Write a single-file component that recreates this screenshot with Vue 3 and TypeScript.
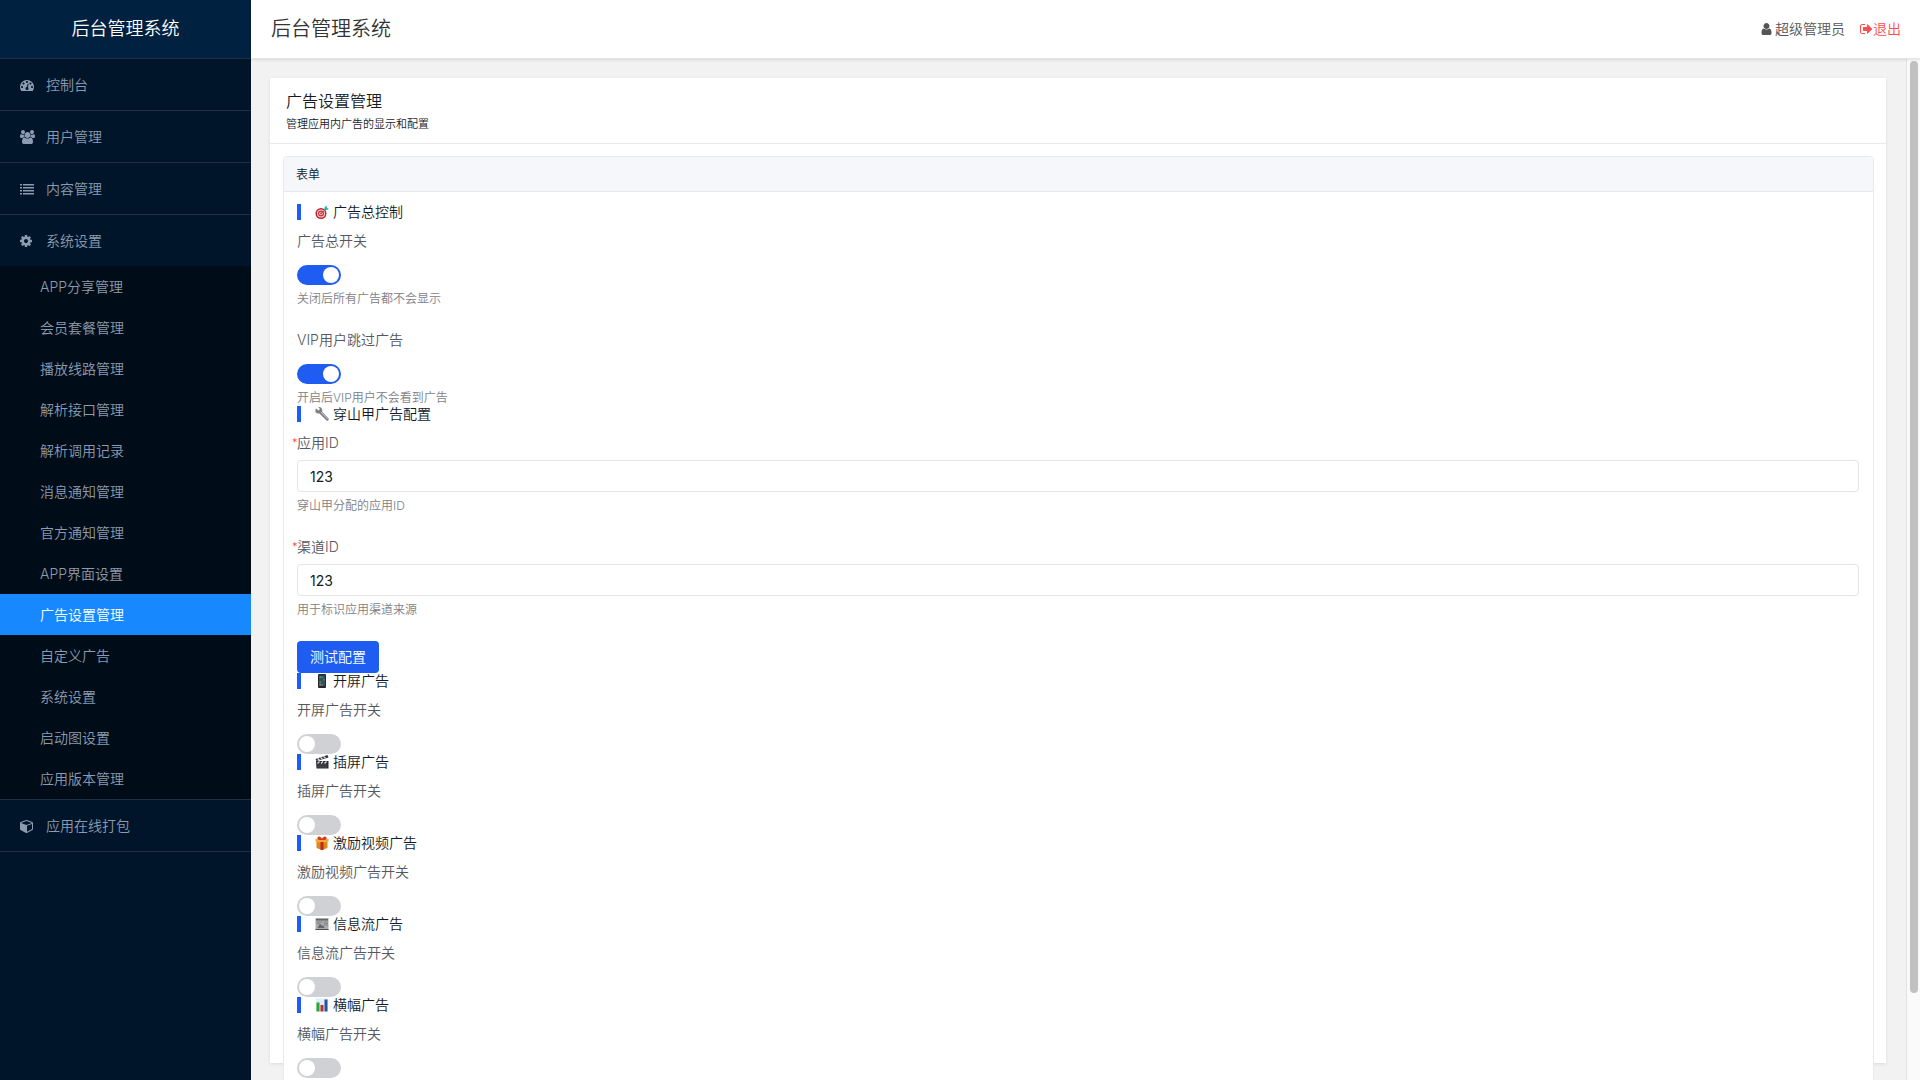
<script setup lang="ts">
import { reactive } from 'vue'

interface MenuItem {
  label: string
  icon: string
  children?: string[]
}

interface SlotSection {
  key: string
  title: string
  icon: string
  enabled: boolean
}

const menu: MenuItem[] = [
  { label: '控制台', icon: 'dashboard' },
  { label: '用户管理', icon: 'users' },
  { label: '内容管理', icon: 'list' },
  {
    label: '系统设置',
    icon: 'cog',
    children: [
      'APP分享管理',
      '会员套餐管理',
      '播放线路管理',
      '解析接口管理',
      '解析调用记录',
      '消息通知管理',
      '官方通知管理',
      'APP界面设置',
      '广告设置管理',
      '自定义广告',
      '系统设置',
      '启动图设置',
      '应用版本管理',
    ],
  },
  { label: '应用在线打包', icon: 'cube' },
]
const current = '广告设置管理'

const icons: Record<string, { box: string; width: number; path: string }> = {
  dashboard: {
    box: '0 0 1792 1792',
    width: 14,
    path: 'M384 1152q0-53-37.5-90.5t-90.5-37.5-90.5 37.5-37.5 90.5 37.5 90.5 90.5 37.5 90.5-37.5 37.5-90.5zm192-448q0-53-37.5-90.5t-90.5-37.5-90.5 37.5-37.5 90.5 37.5 90.5 90.5 37.5 90.5-37.5 37.5-90.5zm428 481l101-382q6-26-7.5-48.5t-38.5-29.5-48 6.5-30 39.5l-101 382q-60 5-107 43.5t-63 98.5q-20 77 20 146t117 89 146-20 89-117q16-60-6-117t-72-91zm660-33q0-53-37.5-90.5t-90.5-37.5-90.5 37.5-37.5 90.5 37.5 90.5 90.5 37.5 90.5-37.5 37.5-90.5zm-640-640q0-53-37.5-90.5t-90.5-37.5-90.5 37.5-37.5 90.5 37.5 90.5 90.5 37.5 90.5-37.5 37.5-90.5zm448 192q0-53-37.5-90.5t-90.5-37.5-90.5 37.5-37.5 90.5 37.5 90.5 90.5 37.5 90.5-37.5 37.5-90.5zm320 448q0 261-141 483-19 29-54 29h-1402q-35 0-54-29-141-221-141-483 0-182 71-348t191-286 286-191 348-71 348 71 286 191 191 286 71 348z',
  },
  users: {
    box: '64 0 1920 1792',
    width: 15,
    path: 'M657 896q-162 5-265 128h-134q-82 0-138-40.5t-56-118.5q0-353 124-353 6 0 43.5 21t97.5 42.5 119 21.5q67 0 133-23-5 37-5 66 0 139 81 256zm1071 637q0 120-73 189.5t-194 69.5h-874q-121 0-194-69.5t-73-189.5q0-53 3.5-103.5t14-109 26.5-108.5 43-97.5 62-81 85.5-53.5 111.5-20q10 0 43 21.5t73 48 107 48 135 21.5 135-21.5 107-48 73-48 43-21.5q61 0 111.5 20t85.5 53.5 62 81 43 97.5 26.5 108.5 14 109 3.5 103.5zm-1024-1277q0 106-75 181t-181 75-181-75-75-181 75-181 181-75 181 75 75 181zm704 384q0 159-112.5 271.5t-271.5 112.5-271.5-112.5-112.5-271.5 112.5-271.5 271.5-112.5 271.5 112.5 112.5 271.5zm576 225q0 78-56 118.5t-138 40.5h-134q-103-123-265-128 81-117 81-256 0-29-5-66 66 23 133 23 59 0 119-21.5t97.5-42.5 43.5-21q124 0 124 353zm-128-609q0 106-75 181t-181 75-181-75-75-181 75-181 181-75 181 75 75 181z',
  },
  list: {
    box: '0 0 1792 1792',
    width: 14,
    path: 'M0 256h256v192H0zM384 256h1408v192H384zM0 640h256v192H0zM384 640h1408v192H384zM0 1024h256v192H0zM384 1024h1408v192H384zM0 1408h256v192H0zM384 1408h1408v192H384z',
  },
  cog: {
    box: '128 0 1536 1792',
    width: 12,
    path: 'M1152 896q0-106-75-181t-181-75-181 75-75 181 75 181 181 75 181-75 75-181zm512-109v222q0 12-8 23t-20 13l-185 28q-19 54-39 91 35 50 107 138 10 12 10 25t-9 23q-27 37-99 108t-94 71q-12 0-26-9l-138-108q-44 23-91 38-16 136-29 186-7 28-36 28h-222q-14 0-24.5-8.5t-11.5-21.5l-28-184q-49-16-90-37l-141 107q-10 9-25 9-14 0-25-11-126-114-165-168-7-10-7-23 0-12 8-23 15-21 51-66.5t54-70.5q-27-50-41-99l-183-27q-13-2-21-12.5t-8-23.5v-222q0-12 8-23t19-13l186-28q14-46 39-92-40-57-107-138-10-12-10-24 0-10 9-23 26-36 98.5-107.5t94.5-71.5q13 0 26 10l138 107q44-23 91-38 16-136 29-186 7-28 36-28h222q14 0 24.5 8.5t11.5 21.5l28 184q49 16 90 37l142-107q9-9 24-9 13 0 25 10 129 119 165 170 7 8 7 22 0 12-8 23-15 21-51 66.5t-54 70.5q26 50 41 98l183 28q13 2 21 12.5t8 23.5z',
  },
  cube: {
    box: '0 0 1664 1792',
    width: 13,
    path: 'M896 1629l640-349v-636l-640 233v752zm-64-865l698-254-698-254-698 254zm832-252v768q0 35-18 65t-49 47l-704 384q-28 16-61 16t-61-16l-704-384q-31-17-49-47t-18-65v-768q0-40 23-73t61-47l704-256q22-8 44-8t44 8l704 256q38 14 61 47t23 73z',
  },
}

const form = reactive({ master: true, vipSkip: true, appId: '123', channelId: '123' })

const slots = reactive<SlotSection[]>([
  { key: 'splash', title: '开屏广告', icon: 'phone', enabled: false },
  { key: 'interstitial', title: '插屏广告', icon: 'clapper', enabled: false },
  { key: 'reward', title: '激励视频广告', icon: 'gift', enabled: false },
  { key: 'feed', title: '信息流广告', icon: 'news', enabled: false },
  { key: 'banner', title: '横幅广告', icon: 'chart', enabled: false },
])
</script>

<template>
  <div class="layout">
    <aside class="sidebar">
      <div class="logo">后台管理系统</div>
      <nav>
        <ul class="menu">
          <li v-for="item in menu" :key="item.label" class="menu-item">
            <a href="#" class="menu-link">
              <span class="menu-icon">
                <svg :viewBox="icons[item.icon].box" :width="icons[item.icon].width" height="14" fill="currentColor" aria-hidden="true">
                  <path :d="icons[item.icon].path" />
                </svg>
              </span>
              {{ item.label }}
            </a>
            <ul v-if="item.children" class="submenu">
              <li v-for="child in item.children" :key="child">
                <a href="#" class="submenu-link" :class="{ active: child === current }">{{ child }}</a>
              </li>
            </ul>
          </li>
        </ul>
      </nav>
    </aside>

    <div class="page">
      <header class="topbar">
        <span class="brand">后台管理系统</span>
        <div class="account">
          <span class="user">
            <svg viewBox="192 0 1408 1792" width="11" height="14" fill="currentColor" aria-hidden="true">
              <path d="M1536 1399q0 109-62.5 187t-150.5 78h-854q-88 0-150.5-78t-62.5-187q0-85 8.5-160.5t31.5-152 58.5-131 94-89 134.5-34.5q131 128 313 128t313-128q76 0 134.5 34.5t94 89 58.5 131 31.5 152 8.5 160.5zm-256-887q0 159-112.5 271.5t-271.5 112.5-271.5-112.5-112.5-271.5 112.5-271.5 271.5-112.5 271.5 112.5 112.5 271.5z" />
            </svg>
            超级管理员
          </span>
          <a href="#" class="logout">
            <svg viewBox="64 0 1664 1792" width="13" height="14" fill="currentColor" aria-hidden="true">
              <path d="M704 1440q0 4 1 20t.5 26.5-3 23.5-10 19.5-20.5 6.5h-320q-119 0-203.5-84.5t-84.5-203.5v-704q0-119 84.5-203.5t203.5-84.5h320q13 0 22.5 9.5t9.5 22.5q0 4 1 20t.5 26.5-3 23.5-10 19.5-20.5 6.5h-320q-66 0-113 47t-47 113v704q0 66 47 113t113 47h312l11.5 1 11.5 3 8 5.5 7 9 2 13.5zm928-544q0 26-19 45l-544 544q-19 19-45 19t-45-19-19-45v-288h-448q-26 0-45-19t-19-45v-384q0-26 19-45t45-19h448v-288q0-26 19-45t45-19 45 19l544 544q19 19 19 45z" />
            </svg>
            退出
          </a>
        </div>
      </header>

      <div class="body">
        <main class="content">
          <div class="card">
            <div class="card-head">
              <h1>广告设置管理</h1>
              <p>管理应用内广告的显示和配置</p>
            </div>
            <form class="panel" @submit.prevent>
              <h2 class="panel-head">表单</h2>
              <div class="panel-body">
                <section>
                  <h3 class="section-title">
                    <svg class="emoji" viewBox="0 0 28 28" aria-hidden="true">
                      <circle cx="12" cy="17" r="11" fill="#c4222b" />
                      <circle cx="12" cy="17" r="8" fill="#f3dede" />
                      <circle cx="12" cy="17" r="6" fill="#cf2a33" />
                      <circle cx="12" cy="17" r="3.6" fill="#f3dede" />
                      <circle cx="12" cy="17" r="1.8" fill="#c4222b" />
                      <path d="M12 17L22 8" stroke="#6a5a5c" stroke-width="1.8" />
                      <path d="M19 10V5l4-4 1 5 4 2-4 2z" fill="#27b3ad" />
                    </svg>
                    广告总控制
                  </h3>
                  <div class="field">
                    <label class="label" for="master">广告总开关</label>
                    <input id="master" v-model="form.master" class="switch" type="checkbox" role="switch" />
                    <p class="help">关闭后所有广告都不会显示</p>
                  </div>
                  <div class="field">
                    <label class="label" for="vip-skip">VIP用户跳过广告</label>
                    <input id="vip-skip" v-model="form.vipSkip" class="switch" type="checkbox" role="switch" />
                    <p class="help">开启后VIP用户不会看到广告</p>
                  </div>
                </section>

                <section>
                  <h3 class="section-title">
                    <svg class="emoji" viewBox="0 0 28 28" aria-hidden="true">
                      <path d="M2 3l5 4 2-1V2L6 0q6-1 8 4 1 3 0 5l13 14q1 3-1 4t-3 0L9 13q-5 1-8-3-1-4 1-7z" fill="#7d7f83" />
                      <path d="M12 10l13 14" stroke="#c9cbce" stroke-width="2" />
                    </svg>
                    穿山甲广告配置
                  </h3>
                  <div class="field">
                    <label class="label required" for="app-id">应用ID</label>
                    <input id="app-id" v-model="form.appId" class="text-input" type="text" required />
                    <p class="help">穿山甲分配的应用ID</p>
                  </div>
                  <div class="field">
                    <label class="label required" for="channel-id">渠道ID</label>
                    <input id="channel-id" v-model="form.channelId" class="text-input" type="text" required />
                    <p class="help">用于标识应用渠道来源</p>
                  </div>
                  <div class="actions">
                    <button type="button" class="primary">测试配置</button>
                  </div>
                </section>

                <section v-for="slot in slots" :key="slot.key">
                  <h3 class="section-title">
                    <svg class="emoji" viewBox="0 0 28 28" aria-hidden="true">
                      <g v-if="slot.icon === 'phone'">
                        <rect x="6" y="0" width="16" height="28" rx="2" fill="#25272b" />
                        <rect x="8" y="3" width="12" height="21" fill="#31505a" />
                        <path d="M9 5h3v3H9zM9 15h3v3H9z" fill="#4fa36a" />
                        <path d="M13 5h3v3h-3zM13 20h3v3h-3z" fill="#3f7fc0" />
                        <path d="M17 10h2v3h-2zM9 20h3v3H9z" fill="#c87b4b" />
                      </g>
                      <g v-else-if="slot.icon === 'clapper'">
                        <path d="M1 8L25 0l2 5L3 12z" fill="#303236" />
                        <path d="M5 7l4 3M11 5l4 3M17 3l4 3" stroke="#e6e7e8" stroke-width="2.4" />
                        <path d="M2 12h25v15H3z" fill="#2b2d31" />
                        <path d="M5 17l4-4M12 17l4-4M19 17l4-4" stroke="#e6e7e8" stroke-width="2.4" />
                        <path d="M5 20h19M5 24h19" stroke="#6d7075" />
                      </g>
                      <g v-else-if="slot.icon === 'gift'">
                        <path d="M3 10l11 3 11-3v14l-11 4-11-4z" fill="#d98a1c" />
                        <path d="M1 6l13-3 13 3v5l-13 3L1 11z" fill="#efac35" />
                        <path d="M11 12h6v16h-6z" fill="#c3261f" />
                        <path d="M14 8Q4 9 5 3q4-5 9 3 5-8 9-3 1 6-9 5z" fill="#d8352b" />
                      </g>
                      <g v-else-if="slot.icon === 'news'">
                        <rect x="1" y="2" width="26" height="24" fill="#a9abad" />
                        <path d="M2 4h24v3H2z" fill="#626467" />
                        <path d="M3 10h12M3 13h6M18 10h8M18 13h8M18 16h8" stroke="#77797c" stroke-width="1.4" />
                        <path d="M5 22l5-9 4 5 2-2 3 6z" fill="#66686b" />
                        <path d="M1 24h26v2H1z" fill="#4b4d50" />
                      </g>
                      <g v-else>
                        <rect x="2" y="1" width="24" height="26" fill="#e3edf4" />
                        <rect x="3" y="9" width="6" height="18" fill="#26a637" />
                        <rect x="11" y="14" width="6" height="13" fill="#c52a2a" />
                        <rect x="19" y="3" width="6" height="24" fill="#1f57a6" />
                      </g>
                    </svg>
                    {{ slot.title }}
                  </h3>
                  <div class="field">
                    <label class="label" :for="slot.key">{{ slot.title }}开关</label>
                    <input :id="slot.key" v-model="slot.enabled" class="switch" type="checkbox" role="switch" />
                  </div>
                </section>
              </div>
            </form>
          </div>
        </main>
        <div class="scroll-track" aria-hidden="true"><div class="scroll-thumb"></div></div>
      </div>
    </div>
  </div>
</template>

<style>
body {
  margin: 0;
  overflow: hidden;
}
</style>

<style scoped>
.layout,
.layout * {
  box-sizing: border-box;
}

.layout {
  display: flex;
  height: 100vh;
  overflow: hidden;
  font-family: Inter, 'Noto Sans CJK SC', sans-serif;
  font-size: 14px;
  font-weight: 350;
  line-height: 22px;
  color: #151b26;
}

h1,
h2,
h3,
p,
ul {
  margin: 0;
  padding: 0;
  font-weight: inherit;
}

ul {
  list-style: none;
}

a {
  text-decoration: none;
}

svg {
  flex: none;
}

.sidebar {
  flex: none;
  width: 251px;
  background: #001529;
  overflow: hidden;
}

.logo {
  height: 59px;
  border-bottom: 1px solid #1f3040;
  background: #002140;
  color: #fff;
  font-size: 18px;
  line-height: 58px;
  text-align: center;
}

.menu-item {
  border-bottom: 1px solid #1f3040;
}

.menu-link {
  display: flex;
  align-items: center;
  height: 51px;
  padding-left: 20px;
  color: #8d9bb0;
}

.menu-icon {
  display: flex;
  width: 26px;
}

.submenu {
  background: #000c17;
}

.submenu-link {
  display: block;
  height: 41px;
  padding-left: 40px;
  line-height: 41px;
  color: #8d9bb0;
}

.submenu-link.active {
  background: #1888ff;
  color: #fff;
}

.page {
  flex: 1;
  display: flex;
  flex-direction: column;
  min-width: 0;
}

.topbar {
  display: flex;
  flex: none;
  align-items: center;
  justify-content: space-between;
  height: 59px;
  padding: 0 19px 0 20px;
  border-bottom: 1px solid #e4e5e7;
  box-shadow: 0 1px 3px rgba(0, 0, 0, 0.1);
  z-index: 1;
}

.brand {
  font-size: 20px;
  color: #333;
}

.account {
  display: flex;
  gap: 15px;
}

.user,
.logout {
  display: flex;
  align-items: center;
}

.user {
  gap: 3px;
  color: #555;
}

.logout {
  color: #ff4d4f;
}

.body {
  flex: 1;
  display: flex;
  min-height: 0;
}

.content {
  flex: 1;
  min-width: 0;
  padding: 19px 20px 17px 19px;
  border-right: 1px solid #e2e2e2;
  background: #f2f2f2;
  overflow: hidden;
}

.card {
  display: flex;
  flex-direction: column;
  height: 100%;
  background: #fff;
  box-shadow: 0 1px 3px rgba(0, 0, 0, 0.1);
}

.card-head {
  flex: none;
  height: 66px;
  padding: 11px 16px;
  border-bottom: 1px solid #e8e9eb;
}

.card-head h1 {
  font-size: 16px;
  line-height: 24px;
}

.card-head p {
  font-size: 11px;
}

.panel {
  flex: none;
  margin: 12px 12px 0 13px;
  border: 1px solid #e8e9eb;
  border-radius: 4px;
  background: #fff;
}

.panel-head {
  padding: 7px 12px 5px;
  border-bottom: 1px solid #e8e9eb;
  border-radius: 3px 3px 0 0;
  background: #f5f7fa;
  font-size: 12px;
}

.panel-body {
  padding: 12px 14px 24px 13px;
}

.section-title {
  display: flex;
  align-items: center;
  gap: 4px;
  height: 16px;
  margin-bottom: 10px;
  padding-left: 14px;
  border-left: 4px solid #1a5cff;
  font-size: 14px;
}

.emoji {
  width: 14px;
  height: 14px;
}

.field + .field {
  margin-top: 22px;
}

.label {
  display: block;
  width: fit-content;
  color: #55585e;
}

.required {
  display: flex;
}

.required::before {
  content: '*';
  width: 5px;
  margin-left: -5px;
  color: #ff3b3b;
  font-size: 11px;
}

.switch {
  display: flex;
  appearance: none;
  width: 44px;
  height: 20px;
  margin: 13px 0 0;
  padding: 2px;
  border-radius: 10px;
  background: #cfd1d5;
}

.switch::before {
  content: '';
  width: 16px;
  height: 16px;
  border-radius: 50%;
  background: #fff;
}

.switch:checked {
  justify-content: flex-end;
  background: #1f5cf2;
}

.help {
  margin-top: 6px;
  font-size: 12px;
  line-height: 16px;
  color: #7e8086;
}

.text-input {
  display: block;
  width: 100%;
  height: 32px;
  margin: 6px 0 0;
  padding: 0 12px;
  border: 1px solid #e4e5e8;
  border-radius: 4px;
  background: #fff;
  color: #151b26;
  font: inherit;
  font-weight: 400;
}

.actions {
  padding-top: 23px;
}

.primary {
  display: block;
  height: 32px;
  padding: 0 13px;
  border: 0;
  border-radius: 4px;
  background: #1f5cf2;
  color: #fff;
  font: inherit;
}

.scroll-track {
  display: flex;
  flex: none;
  flex-direction: column;
  width: 13px;
  padding: 2px 2px 2px 3px;
  background: #fafafa;
}

.scroll-track::after {
  content: '';
  flex: 1;
}

.scroll-thumb {
  flex: 11;
  width: 8px;
  border-radius: 4px;
  background: #c1c1c1;
}
</style>
